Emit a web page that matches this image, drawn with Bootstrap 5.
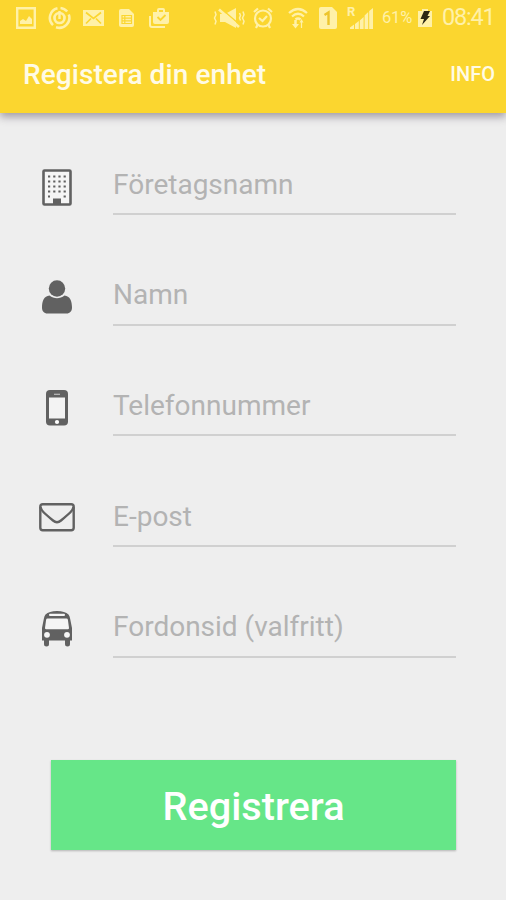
<!DOCTYPE html>
<html lang="sv">
<head>
<meta charset="utf-8">
<meta name="viewport" content="width=device-width, initial-scale=1">
<title>Registera din enhet</title>
<link href="https://cdn.jsdelivr.net/npm/bootstrap@5.3.0/dist/css/bootstrap.min.css" rel="stylesheet">
<style>
body{font-family:Roboto,sans-serif;background:#eee;height:900px;overflow:hidden}
svg{display:block;flex:none}
.app-top{background:#fbd62f;height:113px;box-shadow:0 4px 8px rgba(70,60,80,.45)}
.status{height:35px;color:#fff1a8;padding-left:16px;padding-right:12px}
.left-icons{gap:12px}
.wifi{margin-left:15px}
.sim{margin-left:11px}
.signal{margin-left:10px}
.pct{font-size:16.5px;letter-spacing:-.2px;width:36px;line-height:37px}
.clock{font-size:23.5px;width:52px;margin-left:10px;line-height:37px;letter-spacing:-1.2px}
.title-row{height:78px;padding-left:23px;padding-right:11px;color:#fffbe6}
.title-row h1{font-size:28px;font-weight:500;line-height:36px;padding-top:1px;letter-spacing:.08px}
.title-row a{font-size:20px;font-weight:500;color:#fffbe6}
.fields{padding:47.5px 50px 0 32px}
.field-row{height:110.7px}
.icon-box{width:50px;height:54px;color:#616161;padding-bottom:2px}
.icon-box.tall{padding-bottom:0;padding-top:1px}
.icon-box.mail{padding-bottom:4px}
.field-row .form-control{margin-left:31px;height:54.5px;padding:0 0 5.5px;font-size:28px;line-height:44px;border-bottom:2px solid #d0d0d0;color:#666;box-shadow:none}
.field-row .form-control::placeholder{color:#b3b3b3;opacity:1}
.send{margin:46px 50px 0 51px;height:90px;background:#66e688;color:#fff;font-size:39.700px;font-weight:500;box-shadow:0 1px 2px rgba(0,0,0,.25);padding:3px 0 0}
.send:hover{background:#5add7d;color:#fff}
</style>
</head>
<body>
<header class="app-top position-relative">
  <div class="status d-flex align-items-center justify-content-between">
    <div class="left-icons d-flex align-items-center">
      <svg width="20" height="22" viewBox="0 0 20 22"><path fill="none" stroke="currentColor" stroke-width="2.4" d="M1.2 1.2h17.6v19.6H1.2z"/><path fill="currentColor" d="M4 17v-3l3-2 3 2 3-5 3 3v5z"/></svg>
      <svg width="23" height="24" viewBox="0 0 23 24" fill="none" stroke="currentColor"><path stroke-width="2.500" d="M9.500 2.200A10 10 0 0 0 5 19.200M8 21.200A10 10 0 0 0 20.800 8.500M19.200 5.500A10 10 0 0 0 12.500 2"/><circle cx="11.500" cy="12" r="5" stroke-width="2.700"/><path stroke-width="2.400" d="M11.500 5v8"/></svg>
      <svg width="21" height="16" viewBox="0 0 21 16"><path fill="currentColor" d="M0 0h21v16H0z"/><path fill="none" stroke="#fbd62f" stroke-width="1.700" d="M3 2.500l7.500 6 7.500-6M3 13.500l5-5M18 13.500l-5-5"/></svg>
      <svg width="20" height="20" viewBox="0 0 20 20"><path fill="currentColor" d="M5 1h8l5 5v11a2 2 0 0 1-2 2H5a2 2 0 0 1-2-2V3a2 2 0 0 1 2-2z"/><path fill="none" stroke="#fbd62f" stroke-width="1.200" d="M6 7.500h9.500v8H6zM6 10.200h9.500M6 12.800h9.500M8.800 8v7"/></svg>
      <svg width="22" height="22" viewBox="0 0 22 22"><path fill="currentColor" d="M5 5h4V3q0-2 2-2h4q2 0 2 2v2h4v10q0 2-2 2H7q-2 0-2-2zM11 3v2h4V3z" fill-rule="evenodd"/><path fill="none" stroke="currentColor" stroke-width="2" d="M2 9v9q0 2 2 2h13"/><path fill="none" stroke="#fbd62f" stroke-width="1.800" d="M9.500 10l3 3 5-5"/></svg>
    </div>
    <div class="d-flex align-items-center">
      <svg width="32" height="22" viewBox="0 0 32 22"><path fill="currentColor" d="M7 7h5l11-6v20l-11-6H7z"/><path stroke="#fbd62f" stroke-width="1.500" d="M8 1.500l18 15.500"/><path fill="none" stroke="currentColor" stroke-width="2.600" d="M6 2.500l20 17.500"/><path fill="none" stroke="currentColor" stroke-width="1.500" d="M2 4.500l1 3.200-1.500 3.300 1.500 3.300-1 3.200M26.500 6l1 2.500-1 2.500 1 2.500M30 4.500l1 3.200-1.500 3.300 1.500 3.300-1 3.200"/></svg>
      <svg class="ms-2" width="20" height="22" viewBox="0 0 20 22" fill="none" stroke="currentColor"><circle cx="10" cy="11.500" r="8" stroke-width="2.200"/><path stroke-width="2.200" d="M1 5l4-3.500M19 5l-4-3.500M4.500 18l-1.500 3M15.500 18l1.500 3M6 11l3.500 3 4.500-5"/></svg>
      <svg class="wifi" width="20" height="22" viewBox="0 0 20 22" fill="none" stroke="currentColor"><path stroke-width="2.200" d="M1 6q9-8 18 0M4 9.500q6-5.500 12 0"/><path stroke-width="2.500" d="M7.500 12.500q2.500-2 5 0"/><path stroke-width="2.500" d="M7.500 13v5"/><path stroke-width="1.200" d="M13.500 21v-7"/><path fill="currentColor" stroke="none" d="M4 17h7l-3.500 4.500zM11.500 15.500l2-3.500 2 3.500z"/></svg>
      <svg class="sim" width="18" height="22" viewBox="0 0 18 22"><path fill="currentColor" d="M2 0h11l5 5v15q0 2-2 2H2q-2 0-2-2V2q0-2 2-2z"/><path fill="none" stroke="#edc52b" stroke-width="2.400" d="M5.500 8L9.500 5.500V18"/></svg>
      <svg class="signal" width="27" height="26" viewBox="0 0 27 26"><text x="0" y="11" font-size="13" font-weight="700" fill="currentColor">R</text><path fill="currentColor" d="M3 24v-1.500l4-3V24zM8 19l3.800-3v8H8zM12.800 15.500l3.800-3.500v12h-3.800zM17.600 10.500l3.600-3.500v17h-3.600zM22.200 6L26 3v21h-3.800z"/></svg>
      <span class="pct ms-2">61%</span>
      <svg width="14" height="20" viewBox="0 0 14 20"><path fill="currentColor" d="M4 1h6v2h4v16H0V3h4z"/><path fill="#2c2714" d="M6 3h6L9.500 8H12L4 17l2-6H2.500z"/></svg>
      <span class="clock">08:41</span>
    </div>
  </div>
  <div class="title-row d-flex align-items-center justify-content-between">
    <h1 class="mb-0">Registera din enhet</h1>
    <a class="text-decoration-none" href="#">INFO</a>
  </div>
</header>
<form>
  <div class="fields">
    <div class="field-row d-flex">
      <div class="icon-box tall flex-shrink-0 d-flex align-items-center justify-content-center">
        <svg width="30" height="38" viewBox="0 0 30 38"><rect x="1.500" y="1.500" width="27" height="34" rx="1" fill="#f5f5f5" stroke="currentColor" stroke-width="2.600"/><path fill="none" stroke="currentColor" stroke-width="2.200" stroke-dasharray="2.200 3" d="M6 7.500h18M6 12.500h18M6 17.500h18M6 22.500h18"/><path fill="currentColor" d="M6 26.500h2v2H6zM21.600 26.500h2.200v2h-2.200zM11 29.500h8V36h-8z"/></svg>
      </div>
      <input class="form-control bg-transparent border-top-0 border-start-0 border-end-0 rounded-0" type="text" placeholder="Företagsnamn" aria-label="Företagsnamn">
    </div>
    <div class="field-row d-flex">
      <div class="icon-box flex-shrink-0 d-flex align-items-center justify-content-center">
        <svg width="30" height="34" viewBox="0 0 30 34" fill="currentColor"><path d="M7.500 15.500C2 16 0 21 0 27.500 0 31 2 33.500 5.500 33.500h19c3.500 0 5.500-2.500 5.500-6C30 21 28 16 22.500 15.500 18 19 12 19 7.500 15.500z"/><circle cx="15" cy="8.500" r="8.200"/></svg>
      </div>
      <input class="form-control bg-transparent border-top-0 border-start-0 border-end-0 rounded-0" type="text" placeholder="Namn" aria-label="Namn">
    </div>
    <div class="field-row d-flex">
      <div class="icon-box flex-shrink-0 d-flex align-items-center justify-content-center">
        <svg width="22" height="36" viewBox="0 0 22 36"><rect width="22" height="35.500" rx="4" fill="currentColor"/><path fill="#f3f3f3" d="M3 7.500h16v21H3z"/><path stroke="#bbb" stroke-width="1.200" d="M8 4.300h6"/><circle cx="11" cy="32" r="2.100" fill="#fff"/></svg>
      </div>
      <input class="form-control bg-transparent border-top-0 border-start-0 border-end-0 rounded-0" type="tel" placeholder="Telefonnummer" aria-label="Telefonnummer">
    </div>
    <div class="field-row d-flex">
      <div class="icon-box mail flex-shrink-0 d-flex align-items-center justify-content-center">
        <svg width="36" height="30" viewBox="0 0 36 30" fill="none" stroke="currentColor" stroke-width="2.400"><rect x="1.300" y="1.300" width="33.400" height="26" rx="2.500"/><path d="M1.500 4C2 7.500 5 10 14 17.500q4 3.500 8 0C31 10 34 7.500 34.500 4"/></svg>
      </div>
      <input class="form-control bg-transparent border-top-0 border-start-0 border-end-0 rounded-0" type="email" placeholder="E-post" aria-label="E-post">
    </div>
    <div class="field-row d-flex">
      <div class="icon-box flex-shrink-0 d-flex align-items-center justify-content-center">
        <svg width="32" height="36" viewBox="0 0 32 36"><path fill="currentColor" d="M4.500 3.500Q8 0 16 0t11.500 3.500q1.200 1.500 1.600 4L31 17v12.500h-2V33q0 2.500-2.500 2.500T24 33v-3.500H8V33q0 2.500-2.500 2.500T3 33v-3.500H1V17L2.900 7.500q.4-2.500 1.600-4z"/><path fill="#f5f5f5" d="M9 2.800h14q1 0 1 1.100T23 5H9Q8 5 8 3.900t1-1.100zM6.500 7.500h19q1.200 0 1.400 1.200L28 17q0 1.300-1.200 1.300H5.200Q4 18.300 4 17l1.100-8.300q.2-1.200 1.400-1.200z"/><circle cx="6" cy="23.800" r="2.900" fill="#f5f5f5"/><circle cx="26" cy="23.800" r="2.900" fill="#f5f5f5"/></svg>
      </div>
      <input class="form-control bg-transparent border-top-0 border-start-0 border-end-0 rounded-0" type="text" placeholder="Fordonsid (valfritt)" aria-label="Fordonsid (valfritt)">
    </div>
  </div>
  <div class="d-grid">
    <button class="send btn border-0 rounded-0" type="button">Registrera</button>
  </div>
</form>
<script src="https://cdn.jsdelivr.net/npm/bootstrap@5.3.0/dist/js/bootstrap.bundle.min.js"></script>
</body>
</html>
